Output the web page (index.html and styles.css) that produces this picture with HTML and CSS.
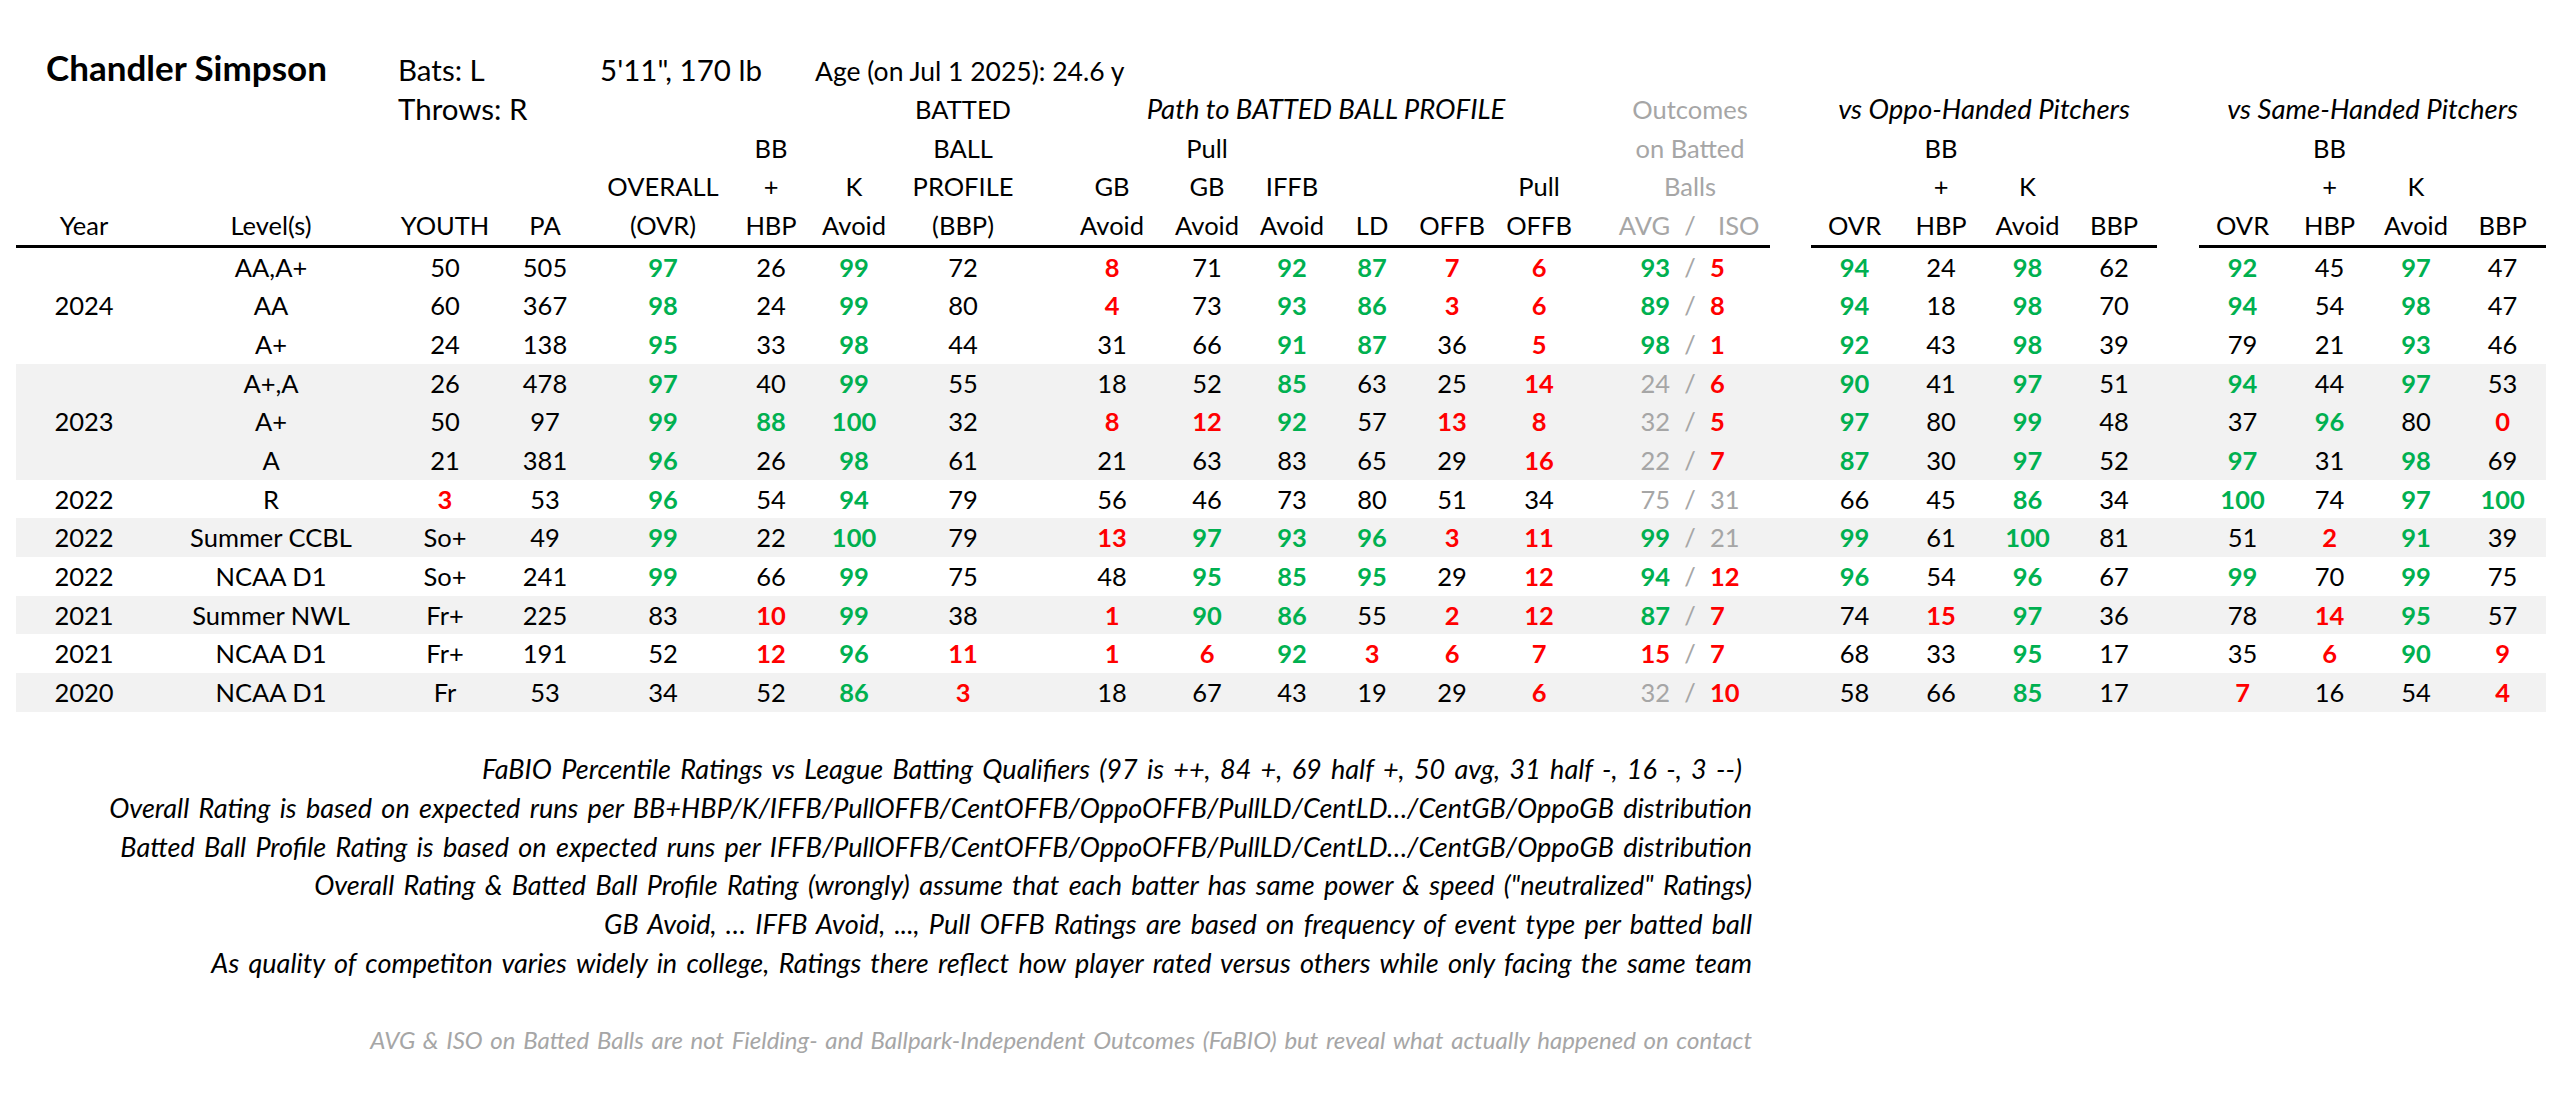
FILE: index.html
```html
<!DOCTYPE html>
<html lang="en">
<head>
<meta charset="utf-8">
<title>Chandler Simpson - FaBIO Ratings</title>
<link rel="stylesheet" href="styles.css">
</head>
<body>
<div class="sheet">
<table class="grid">
<colgroup>
<col style="width:136px"><col style="width:238px"><col style="width:110px"><col style="width:90px">
<col style="width:146px"><col style="width:70px"><col style="width:96px"><col style="width:122px">
<col style="width:132px"><col style="width:94px"><col style="width:84px"><col style="width:76px">
<col style="width:84px"><col style="width:90px"><col style="width:186px"><col style="width:41px">
<col style="width:87px"><col style="width:86px"><col style="width:87px"><col style="width:86px">
<col style="width:42px">
<col style="width:87px"><col style="width:87px"><col style="width:86px"><col style="width:87px">
</colgroup>
<thead>
<tr class="title-row">
  <td colspan="2" class="name">Chandler Simpson</td>
  <td colspan="2" class="info">Bats: L</td>
  <td colspan="2" class="info info-size">5'11", 170 lb</td>
  <td colspan="19" class="info info-age">Age (on Jul 1 2025): 24.6 y</td>
</tr>
<tr>
  <td colspan="2"></td>
  <td colspan="2" class="info">Throws: R</td>
  <td></td><td></td><td></td>
  <td>BATTED</td>
  <td colspan="6" class="c-gba it">Path to BATTED BALL PROFILE</td>
  <td class="c-ai m">Outcomes</td>
  <td class="gap"></td>
  <td colspan="4" class="it">vs Oppo-Handed Pitchers</td>
  <td class="gap"></td>
  <td colspan="4" class="it">vs Same-Handed Pitchers</td>
</tr>
<tr>
  <td></td><td></td><td></td><td></td><td></td>
  <td>BB</td><td></td>
  <td>BALL</td>
  <td class="c-gba"></td><td class="c-pgb">Pull</td><td></td><td></td><td></td><td></td>
  <td class="c-ai m">on Batted</td>
  <td class="gap"></td>
  <td></td><td>BB</td><td></td><td></td>
  <td class="gap"></td>
  <td></td><td>BB</td><td></td><td></td>
</tr>
<tr>
  <td></td><td></td><td></td><td></td>
  <td>OVERALL</td><td>+</td><td>K</td>
  <td>PROFILE</td>
  <td class="c-gba">GB</td><td class="c-pgb">GB</td><td>IFFB</td><td></td><td></td><td>Pull</td>
  <td class="c-ai m">Balls</td>
  <td class="gap"></td>
  <td></td><td>+</td><td>K</td><td></td>
  <td class="gap"></td>
  <td></td><td>+</td><td>K</td><td></td>
</tr>
<tr class="rule-row">
  <td>Year</td><td>Level(s)</td><td>YOUTH</td><td>PA</td>
  <td>(OVR)</td><td>HBP</td><td>Avoid</td>
  <td>(BBP)</td>
  <td class="c-gba">Avoid</td><td class="c-pgb">Avoid</td><td>Avoid</td><td>LD</td><td>OFFB</td><td>OFFB</td>
  <td class="c-ai m"><div class="ai ai-head"><span class="avg">AVG</span><span class="sl">/</span><span class="iso">ISO</span></div></td>
  <td class="gap"></td>
  <td>OVR</td><td>HBP</td><td>Avoid</td><td>BBP</td>
  <td class="gap"></td>
  <td>OVR</td><td>HBP</td><td>Avoid</td><td>BBP</td>
</tr>
</thead>
<tbody>
<tr>
  <td rowspan="3" class="yr">2024</td><td>AA,A+</td><td>50</td><td>505</td>
  <td class="g">97</td><td>26</td><td class="g">99</td><td>72</td>
  <td class="c-gba r">8</td><td class="c-pgb">71</td><td class="g">92</td><td class="g">87</td><td class="r">7</td><td class="r">6</td>
  <td class="c-ai"><div class="ai"><span class="avg g">93</span><span class="sl">/</span><span class="iso r">5</span></div></td>
  <td class="gap"></td>
  <td class="g">94</td><td>24</td><td class="g">98</td><td>62</td>
  <td class="gap"></td>
  <td class="g">92</td><td>45</td><td class="g">97</td><td>47</td>
</tr>
<tr>
  <td>AA</td><td>60</td><td>367</td>
  <td class="g">98</td><td>24</td><td class="g">99</td><td>80</td>
  <td class="c-gba r">4</td><td class="c-pgb">73</td><td class="g">93</td><td class="g">86</td><td class="r">3</td><td class="r">6</td>
  <td class="c-ai"><div class="ai"><span class="avg g">89</span><span class="sl">/</span><span class="iso r">8</span></div></td>
  <td class="gap"></td>
  <td class="g">94</td><td>18</td><td class="g">98</td><td>70</td>
  <td class="gap"></td>
  <td class="g">94</td><td>54</td><td class="g">98</td><td>47</td>
</tr>
<tr>
  <td>A+</td><td>24</td><td>138</td>
  <td class="g">95</td><td>33</td><td class="g">98</td><td>44</td>
  <td class="c-gba">31</td><td class="c-pgb">66</td><td class="g">91</td><td class="g">87</td><td>36</td><td class="r">5</td>
  <td class="c-ai"><div class="ai"><span class="avg g">98</span><span class="sl">/</span><span class="iso r">1</span></div></td>
  <td class="gap"></td>
  <td class="g">92</td><td>43</td><td class="g">98</td><td>39</td>
  <td class="gap"></td>
  <td>79</td><td>21</td><td class="g">93</td><td>46</td>
</tr>
</tbody>
<tbody class="band">
<tr>
  <td rowspan="3" class="yr">2023</td><td>A+,A</td><td>26</td><td>478</td>
  <td class="g">97</td><td>40</td><td class="g">99</td><td>55</td>
  <td class="c-gba">18</td><td class="c-pgb">52</td><td class="g">85</td><td>63</td><td>25</td><td class="r">14</td>
  <td class="c-ai"><div class="ai"><span class="avg m">24</span><span class="sl">/</span><span class="iso r">6</span></div></td>
  <td class="gap"></td>
  <td class="g">90</td><td>41</td><td class="g">97</td><td>51</td>
  <td class="gap"></td>
  <td class="g">94</td><td>44</td><td class="g">97</td><td>53</td>
</tr>
<tr>
  <td>A+</td><td>50</td><td>97</td>
  <td class="g">99</td><td class="g">88</td><td class="g">100</td><td>32</td>
  <td class="c-gba r">8</td><td class="c-pgb r">12</td><td class="g">92</td><td>57</td><td class="r">13</td><td class="r">8</td>
  <td class="c-ai"><div class="ai"><span class="avg m">32</span><span class="sl">/</span><span class="iso r">5</span></div></td>
  <td class="gap"></td>
  <td class="g">97</td><td>80</td><td class="g">99</td><td>48</td>
  <td class="gap"></td>
  <td>37</td><td class="g">96</td><td>80</td><td class="r">0</td>
</tr>
<tr>
  <td>A</td><td>21</td><td>381</td>
  <td class="g">96</td><td>26</td><td class="g">98</td><td>61</td>
  <td class="c-gba">21</td><td class="c-pgb">63</td><td>83</td><td>65</td><td>29</td><td class="r">16</td>
  <td class="c-ai"><div class="ai"><span class="avg m">22</span><span class="sl">/</span><span class="iso r">7</span></div></td>
  <td class="gap"></td>
  <td class="g">87</td><td>30</td><td class="g">97</td><td>52</td>
  <td class="gap"></td>
  <td class="g">97</td><td>31</td><td class="g">98</td><td>69</td>
</tr>
</tbody>
<tbody>
<tr>
  <td>2022</td><td>R</td><td class="r">3</td><td>53</td>
  <td class="g">96</td><td>54</td><td class="g">94</td><td>79</td>
  <td class="c-gba">56</td><td class="c-pgb">46</td><td>73</td><td>80</td><td>51</td><td>34</td>
  <td class="c-ai"><div class="ai"><span class="avg m">75</span><span class="sl">/</span><span class="iso m">31</span></div></td>
  <td class="gap"></td>
  <td>66</td><td>45</td><td class="g">86</td><td>34</td>
  <td class="gap"></td>
  <td class="g">100</td><td>74</td><td class="g">97</td><td class="g">100</td>
</tr>
<tr class="band">
  <td>2022</td><td>Summer CCBL</td><td>So+</td><td>49</td>
  <td class="g">99</td><td>22</td><td class="g">100</td><td>79</td>
  <td class="c-gba r">13</td><td class="c-pgb g">97</td><td class="g">93</td><td class="g">96</td><td class="r">3</td><td class="r">11</td>
  <td class="c-ai"><div class="ai"><span class="avg g">99</span><span class="sl">/</span><span class="iso m">21</span></div></td>
  <td class="gap"></td>
  <td class="g">99</td><td>61</td><td class="g">100</td><td>81</td>
  <td class="gap"></td>
  <td>51</td><td class="r">2</td><td class="g">91</td><td>39</td>
</tr>
<tr>
  <td>2022</td><td>NCAA D1</td><td>So+</td><td>241</td>
  <td class="g">99</td><td>66</td><td class="g">99</td><td>75</td>
  <td class="c-gba">48</td><td class="c-pgb g">95</td><td class="g">85</td><td class="g">95</td><td>29</td><td class="r">12</td>
  <td class="c-ai"><div class="ai"><span class="avg g">94</span><span class="sl">/</span><span class="iso r">12</span></div></td>
  <td class="gap"></td>
  <td class="g">96</td><td>54</td><td class="g">96</td><td>67</td>
  <td class="gap"></td>
  <td class="g">99</td><td>70</td><td class="g">99</td><td>75</td>
</tr>
<tr class="band">
  <td>2021</td><td>Summer NWL</td><td>Fr+</td><td>225</td>
  <td>83</td><td class="r">10</td><td class="g">99</td><td>38</td>
  <td class="c-gba r">1</td><td class="c-pgb g">90</td><td class="g">86</td><td>55</td><td class="r">2</td><td class="r">12</td>
  <td class="c-ai"><div class="ai"><span class="avg g">87</span><span class="sl">/</span><span class="iso r">7</span></div></td>
  <td class="gap"></td>
  <td>74</td><td class="r">15</td><td class="g">97</td><td>36</td>
  <td class="gap"></td>
  <td>78</td><td class="r">14</td><td class="g">95</td><td>57</td>
</tr>
<tr>
  <td>2021</td><td>NCAA D1</td><td>Fr+</td><td>191</td>
  <td>52</td><td class="r">12</td><td class="g">96</td><td class="r">11</td>
  <td class="c-gba r">1</td><td class="c-pgb r">6</td><td class="g">92</td><td class="r">3</td><td class="r">6</td><td class="r">7</td>
  <td class="c-ai"><div class="ai"><span class="avg r">15</span><span class="sl">/</span><span class="iso r">7</span></div></td>
  <td class="gap"></td>
  <td>68</td><td>33</td><td class="g">95</td><td>17</td>
  <td class="gap"></td>
  <td>35</td><td class="r">6</td><td class="g">90</td><td class="r">9</td>
</tr>
<tr class="band">
  <td>2020</td><td>NCAA D1</td><td>Fr</td><td>53</td>
  <td>34</td><td>52</td><td class="g">86</td><td class="r">3</td>
  <td class="c-gba">18</td><td class="c-pgb">67</td><td>43</td><td>19</td><td>29</td><td class="r">6</td>
  <td class="c-ai"><div class="ai"><span class="avg m">32</span><span class="sl">/</span><span class="iso r">10</span></div></td>
  <td class="gap"></td>
  <td>58</td><td>66</td><td class="g">85</td><td>17</td>
  <td class="gap"></td>
  <td class="r">7</td><td>16</td><td>54</td><td class="r">4</td>
</tr>
</tbody>
</table>

<div class="notes">
  <p class="note note-first">FaBIO Percentile Ratings vs League Batting Qualifiers (97 is ++, 84 +, 69 half +, 50 avg, 31 half -, 16 -, 3 --)</p>
  <p class="note">Overall Rating is based on expected runs per BB+HBP/K/IFFB/PullOFFB/CentOFFB/OppoOFFB/PullLD/CentLD…/CentGB/OppoGB distribution</p>
  <p class="note">Batted Ball Profile Rating is based on expected runs per IFFB/PullOFFB/CentOFFB/OppoOFFB/PullLD/CentLD…/CentGB/OppoGB distribution</p>
  <p class="note">Overall Rating &amp; Batted Ball Profile Rating (wrongly) assume that each batter has same power &amp; speed ("neutralized" Ratings)</p>
  <p class="note">GB Avoid, … IFFB Avoid, ..., Pull OFFB Ratings are based on frequency of event type per batted ball</p>
  <p class="note">As quality of competiton varies widely in college, Ratings there reflect how player rated versus others while only facing the same team</p>
  <p class="note note-gray">AVG &amp; ISO on Batted Balls are not Fielding- and Ballpark-Independent Outcomes (FaBIO) but reveal what actually happened on contact</p>
</div>
</div>
</body>
</html>
```

FILE: styles.css
```css
* {
  box-sizing: border-box;
}

html, body {
  margin: 0;
  padding: 0;
  background: #ffffff;
}

body {
  font-family: Lato, "Liberation Sans", sans-serif;
  color: #000000;
  font-size: 25.5px;
}

.sheet {
  padding-left: 16px;
  width: 2560px;
}

.grid {
  border-collapse: separate;
  border-spacing: 0;
  table-layout: fixed;
  width: 2530px;
  font-size: 25.5px;
}

.grid tr {
  height: 38.67px;
}

.grid td {
  padding: 0;
  text-align: center;
  vertical-align: bottom;
  white-space: nowrap;
  line-height: 38.67px;
  overflow: visible;
}

/* title row */
.grid tr.title-row {
  height: 90px;
}

.grid .title-row td {
  line-height: 1;
  padding-bottom: 6px;
  text-align: left;
}

.grid .title-row .name {
  font-weight: 700;
  font-size: 35px;
  padding-left: 30px;
  padding-bottom: 5px;
}

.grid td.info {
  text-align: left;
  padding-left: 8px;
  font-size: 29.5px;
}

.grid .title-row td.info-size {
  padding-left: 10px;
}

.grid .title-row td.info-age {
  padding-left: 9px;
  font-size: 26.5px;
}

/* column offsets */
.grid td.c-gba {
  padding-left: 44px;
}

.grid td.c-pgb {
  padding-left: 8px;
}

.grid td.c-ai {
  padding-left: 26px;
}

/* header rule */
.grid .rule-row td {
  border-bottom: 3px solid #000000;
}

.grid .rule-row td.gap {
  border-bottom: none;
}

/* value colours */
.g {
  color: #00b050;
  font-weight: 700;
}

.r {
  color: #ff0000;
  font-weight: 700;
}

.m {
  color: #a6a6a6;
}

.it {
  font-style: italic;
  font-size: 27.5px;
}

.yr {
  vertical-align: middle !important;
}

/* bands */
.band {
  background: #f2f2f2;
}

/* AVG / ISO split cell */
.ai {
  display: grid;
  grid-template-columns: 1fr 40px 1fr;
}

.ai .avg {
  text-align: right;
}

.ai .sl {
  text-align: center;
  color: #a6a6a6;
  font-weight: 400;
}

.ai .iso {
  text-align: left;
}

.ai-head .iso {
  padding-left: 8px;
}

/* notes */
.notes {
  width: 1736px;
  margin-top: 38.67px;
  font-style: italic;
  font-size: 27px;
  word-spacing: 3px;
}

.note {
  margin: 0;
  text-align: right;
  line-height: 38.67px;
  height: 38.67px;
  white-space: nowrap;
}

.note-first {
  padding-right: 10px;
}

.note-gray {
  color: #a6a6a6;
  font-size: 24px;
  word-spacing: 2px;
  margin-top: 38.67px;
}
```
